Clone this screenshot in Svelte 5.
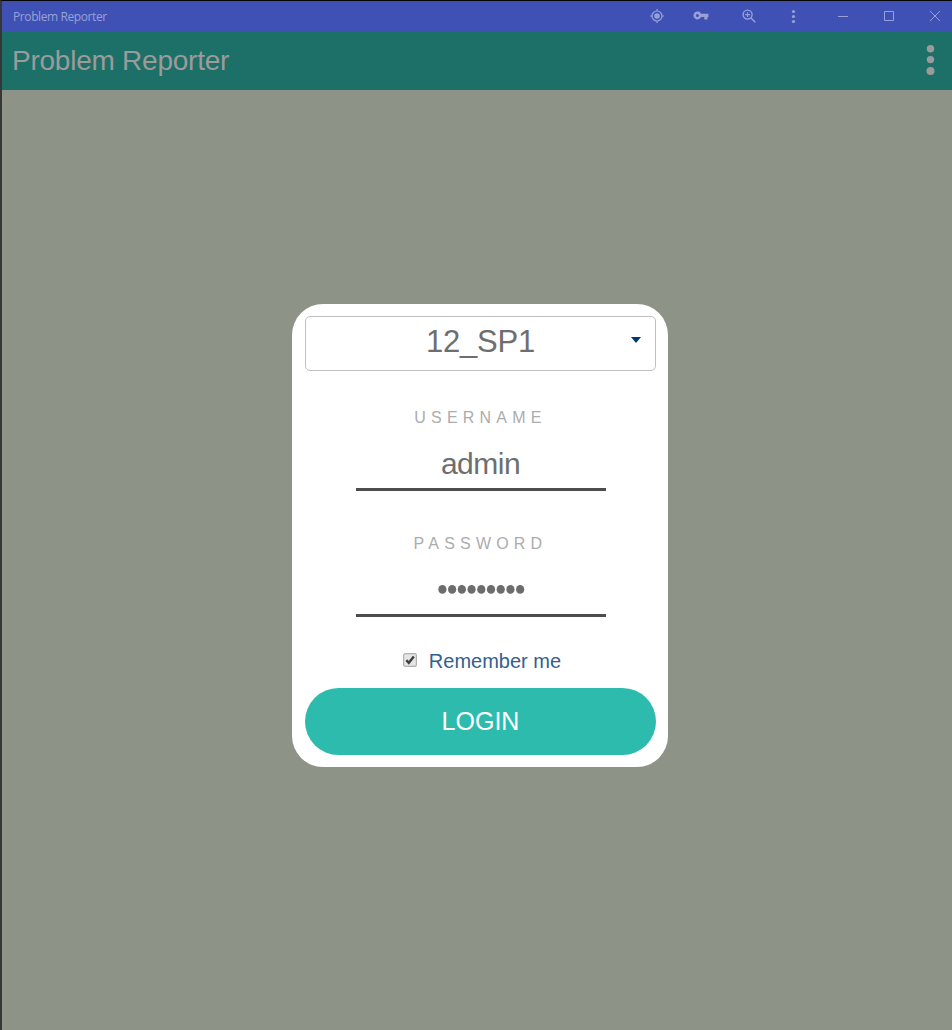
<script>
  let username = $state('admin');
  let remember = $state(true);
  const dots = Array.from({ length: 9 }, (_, i) => i);
</script>

<div class="window">
  <div class="titlebar">
    <span class="caption">Problem Reporter</span>
    <div class="tools">
      <svg class="icon" style:width="42px" viewBox="0 0 42 30">
        <g fill="none" stroke="currentColor" stroke-width="1.2">
          <circle cx="19" cy="14" r="5" />
          <path d="M19 7v2M19 19v2M12 14h2M24 14h2" />
        </g>
        <circle cx="19" cy="14" r="2.8" fill="currentColor" />
      </svg>
      <svg class="icon" style:width="46px" viewBox="0 0 46 30">
        <path fill="currentColor" fill-rule="evenodd" d="M24.6 11.8A4 4 0 1 0 24.6 15.1H27.8V17.5H31V15.1H31.9V11.8ZM20.9 12A1.5 1.5 0 1 1 20.9 15A1.5 1.5 0 1 1 20.9 12Z" transform="translate(-3.5 0)" />
      </svg>
      <svg class="icon" style:width="48px" viewBox="0 0 48 30">
        <g fill="none" stroke="currentColor" stroke-width="1.4">
          <circle cx="21.6" cy="12.6" r="4.5" />
          <path d="M25 16L29.2 20.2" />
          <path d="M21.6 10.2v4.8M19.2 12.6h4.8" stroke-width="1.1" />
        </g>
      </svg>
      <svg class="icon" style:width="32px" viewBox="0 0 32 30">
        <g fill="currentColor">
          <circle cx="19.5" cy="9.5" r="1.6" />
          <circle cx="19.5" cy="14.5" r="1.6" />
          <circle cx="19.5" cy="19.5" r="1.6" />
        </g>
      </svg>
      <svg class="icon ctl" style:width="46px" viewBox="0 0 46 30">
        <path d="M32 14.5h10" />
      </svg>
      <svg class="icon ctl" style:width="46px" viewBox="0 0 46 30">
        <path d="M32.5 9.5h9v9h-9z" />
      </svg>
      <svg class="icon ctl" style:width="54px" viewBox="0 0 54 30">
        <path d="M32 9l10 10M42 9L32 19" />
      </svg>
    </div>
  </div>

  <header class="appbar">
    <h1>Problem Reporter</h1>
    <svg class="more" viewBox="0 0 10 34">
      <circle cx="5.5" cy="4.7" r="3.7" />
      <circle cx="5.5" cy="15.6" r="3.7" />
      <circle cx="5.5" cy="27.1" r="4" />
    </svg>
  </header>

  <main>
    <form class="card" onsubmit={(e) => e.preventDefault()}>
      <div class="select">
        <span>12_SP1</span>
        <svg class="arrow" viewBox="0 0 10 6"><path d="M0 0h10L5 6z" /></svg>
      </div>

      <div class="label user-label">USERNAME</div>
      <div class="field user">{username}</div>

      <div class="label pass-label">PASSWORD</div>
      <div class="field password">
        <svg class="dots" viewBox="0 0 88 10">
          {#each dots as dot (dot)}
            <ellipse cx={5.4 + dot * 9.72} cy="5.4" rx="4.1" ry="4.4" />
          {/each}
        </svg>
      </div>

      <div class="remember">
        <svg class="check" viewBox="0 0 14 14">
          <rect x="0.6" y="0.6" width="12.8" height="12.8" rx="2" />
          {#if remember}<path d="M3.3 7.2L5.8 9.8L10.8 3.4" />{/if}
        </svg>
        <span>Remember me</span>
      </div>

      <button>LOGIN</button>
    </form>
  </main>
</div>

<style>
  :global(body) {
    background: #8d9387;
  }
  .window {
    box-sizing: border-box;
    width: 952px;
    height: 1030px;
    border-top: 1px solid #050507;
    border-left: 2px solid #373737;
    background: #8d9387;
    display: flex;
    flex-direction: column;
    overflow: hidden;
    font-family: "Liberation Sans", Arial, sans-serif;
  }
  .titlebar {
    box-sizing: border-box;
    height: 31px;
    flex: none;
    display: flex;
    justify-content: space-between;
    background: #3f51b5;
    border-top: 1px solid #4c5080;
    color: #98a1d7;
  }
  .caption {
    margin-left: 11px;
    font: 12px/30px "Open Sans", "Noto Sans", sans-serif;
    letter-spacing: -0.4px;
  }
  .tools {
    display: flex;
  }
  .icon {
    height: 30px;
    flex: none;
    display: block;
  }
  .ctl {
    fill: none;
    stroke: currentColor;
    stroke-width: 1;
  }
  .appbar {
    height: 58px;
    flex: none;
    display: flex;
    align-items: center;
    justify-content: space-between;
    padding: 0 17px 0 10px;
    background: #1c7067;
    color: #9b9b9b;
  }
  h1 {
    margin: 0;
    font-size: 28px;
    font-weight: 400;
    line-height: 58px;
    letter-spacing: -0.24px;
  }
  .more {
    width: 10px;
    height: 34px;
    fill: #9b9b9b;
  }
  main {
    flex: 1;
    display: flex;
    justify-content: center;
    align-items: flex-start;
    padding-top: 214px;
    padding-left: 6px;
  }
  .card {
    box-sizing: border-box;
    width: 376px;
    height: 463px;
    padding: 12px 12px 12px 13px;
    border-radius: 31px;
    background: #fff;
    display: flex;
    flex-direction: column;
    align-items: center;
  }
  .select {
    box-sizing: border-box;
    width: 100%;
    height: 55px;
    flex: none;
    display: grid;
    grid-template-columns: 1fr auto 1fr;
    align-items: center;
    border: 1.5px solid #c0c0c0;
    border-radius: 5px;
    color: #6e6e6e;
    font-size: 31px;
    line-height: 50px;
    letter-spacing: -0.2px;
    padding-bottom: 3px;
  }
  .select span {
    grid-column: 2;
  }
  .arrow {
    width: 10px;
    height: 6px;
    justify-self: end;
    margin: 0 14px 4px 0;
    fill: #003a70;
  }
  .label {
    flex: none;
    height: 20px;
    font-size: 16px;
    line-height: 20px;
    letter-spacing: 5.2px;
    color: #acacac;
  }
  .user-label {
    margin-top: 36.5px;
  }
  .pass-label {
    margin-top: 43px;
  }
  .field {
    box-sizing: border-box;
    flex: none;
    width: 250px;
    height: 63px;
    border-bottom: 3px solid #4d4d4d;
    display: flex;
    align-items: center;
    justify-content: center;
    color: #6e6e6e;
    font-size: 30px;
    letter-spacing: -0.5px;
    padding-top: 13px;
  }
  .dots {
    width: 88px;
    height: 10px;
    fill: #6c6c6c;
  }
  .password {
    padding-top: 11px;
  }
  .remember {
    flex: none;
    height: 26px;
    margin-top: 32px;
    display: flex;
    align-items: center;
    gap: 11.5px;
    color: #33608f;
    font-size: 20px;
    padding-left: 3.5px;
  }
  .check {
    width: 14px;
    height: 14px;
    margin-bottom: 3px;
  }
  .check rect {
    fill: #e6e6e6;
    stroke: #b0b0b0;
    stroke-width: 1.2;
  }
  .check path {
    fill: none;
    stroke: #404040;
    stroke-width: 2.4;
  }
  button {
    flex: none;
    width: 100%;
    height: 67px;
    margin-top: auto;
    padding: 0;
    border: 0;
    border-radius: 34px;
    background: #2cbbad;
    color: #fff;
    font-family: inherit;
    font-size: 25px;
    line-height: 67px;
  }
</style>
